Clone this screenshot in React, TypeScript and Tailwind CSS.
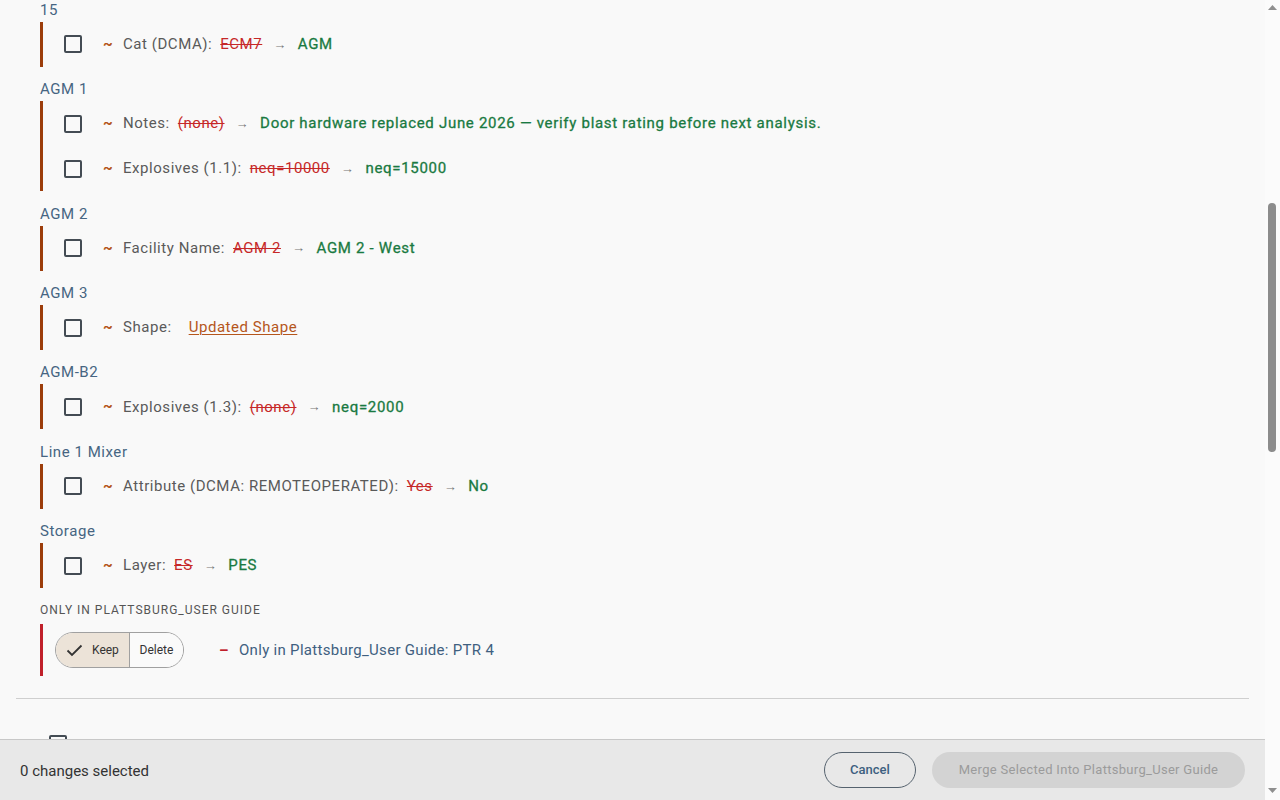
import React, { useLayoutEffect, useRef } from "react";

type Row = { label: string; old?: string; next?: string; link?: string };
type Section = { name: string; rows: Row[] };

const above: Section[] = [
  { name: "10", rows: [{ label: "Cat (DCMA):", old: "ECM", next: "AGM" }] },
  { name: "11", rows: [{ label: "Facility Name:", old: "11", next: "Bldg 11" }] },
  { name: "12", rows: [{ label: "Explosives (1.1):", old: "neq=500", next: "neq=750" }] },
  { name: "13", rows: [{ label: "Layer:", old: "ES", next: "PES" }] },
  { name: "14", rows: [{ label: "Shape:", link: "Updated Shape" }] },
];

const sections: Section[] = [
  { name: "15", rows: [{ label: "Cat (DCMA):", old: "ECM7", next: "AGM" }] },
  {
    name: "AGM 1",
    rows: [
      {
        label: "Notes:",
        old: "(none)",
        next: "Door hardware replaced June 2026 — verify blast rating before next analysis.",
      },
      { label: "Explosives (1.1):", old: "neq=10000", next: "neq=15000" },
    ],
  },
  { name: "AGM 2", rows: [{ label: "Facility Name:", old: "AGM 2", next: "AGM 2 - West" }] },
  { name: "AGM 3", rows: [{ label: "Shape:", link: "Updated Shape" }] },
  { name: "AGM-B2", rows: [{ label: "Explosives (1.3):", old: "(none)", next: "neq=2000" }] },
  {
    name: "Line 1 Mixer",
    rows: [{ label: "Attribute (DCMA: REMOTEOPERATED):", old: "Yes", next: "No" }],
  },
  { name: "Storage", rows: [{ label: "Layer:", old: "ES", next: "PES" }] },
];

const below = [
  "Apply layer styling from Plattsburg_Draft",
  "Copy new facility symbols",
  "Update arc definitions",
  "Recalculate QD arcs after merge",
  "Keep custom labels",
  "Merge PES/ES relationships",
  "Merge exposure notes",
  "Include deleted facilities",
  "Include hidden layers",
  "Include archived revisions",
  "Preserve author metadata",
  "Preserve map extents",
  "Preserve print layouts",
  "Notify reviewers after merge",
  "Create backup before merge",
  "Write merge report",
  "Validate geometry",
  "Validate explosives limits",
  "Validate hazard divisions",
];

function Checkbox() {
  return (
    <span className="block h-[18px] w-[18px] shrink-0 rounded-[2px] border-2 border-[#444c54] bg-transparent" />
  );
}

function ChangeRow({ row }: { row: Row }) {
  return (
    <div className="flex h-[45px] items-center">
      <Checkbox />
      <span className="ml-[21px] w-[7px] text-[15px] font-bold leading-none text-[#b5561c]">~</span>
      <span className="ml-[13px] text-[#5a5a5a]">{row.label}</span>
      {row.link ? (
        <span className="ml-[17px] text-[#b5561c] underline decoration-1 underline-offset-2">
          {row.link}
        </span>
      ) : (
        <>
          <span className="ml-[8px] text-[#c62828] line-through decoration-1">{row.old}</span>
          <span className="mx-[11px] text-[13px] text-[#777]">→</span>
          <span className="tracking-[0.7px] text-[#1a7a42] [-webkit-text-stroke:0.3px_#1a7a42]">
            {row.next}
          </span>
        </>
      )}
    </div>
  );
}

function SectionBlock({ s, anchor }: { s: Section; anchor?: React.Ref<HTMLDivElement> }) {
  return (
    <div className="mt-[10.4px]">
      <div ref={anchor} className="h-6 text-[15px] leading-6 text-[#466582]">
        {s.name}
      </div>
      <div className="border-l-[3px] border-[#9c3d0b] pl-[21px]">
        {s.rows.map((r, i) => (
          <ChangeRow key={i} row={r} />
        ))}
      </div>
    </div>
  );
}

export default function App() {
  const scroller = useRef<HTMLDivElement>(null);
  const anchor = useRef<HTMLDivElement>(null);

  useLayoutEffect(() => {
    const sc = scroller.current;
    const an = anchor.current;
    if (sc && an) {
      sc.scrollTop += an.getBoundingClientRect().top + 2;
    }
  }, []);

  return (
    <div
      className="flex h-screen bg-[#f9f9f9] text-[15px] tracking-[0.55px] text-[#333]"
      style={{ fontFamily: "Roboto, 'Liberation Sans', sans-serif" }}
    >
      <div ref={scroller} className="relative h-screen w-[1265px] shrink-0 overflow-y-scroll">
        <div className="px-4">
          <div className="pl-6 pt-6">
            <div className="text-[20px] font-medium text-[#2f4a63]">
              Merge Plattsburg_Draft into Plattsburg_User Guide
            </div>
            <div className="mt-2 text-[13px] text-[#666]">
              Review the differences below and select the changes to merge.
            </div>
            <div className="mt-6 text-[12px] font-medium uppercase tracking-[1px] text-[#555]">
              Changed in Plattsburg_Draft
            </div>
            {above.map((s) => (
              <SectionBlock key={s.name} s={s} />
            ))}
            {sections.map((s, i) => (
              <SectionBlock key={s.name} s={s} anchor={i === 0 ? anchor : undefined} />
            ))}

            <div className="mt-[10px] h-6 text-[12px] uppercase leading-6 tracking-[1px] text-[#555]">
              Only in Plattsburg_User Guide
            </div>
            <div className="mt-[2px] flex items-center border-l-[3px] border-[#c0202a] py-2 pl-3">
              <div className="flex h-9 overflow-hidden rounded-full border border-[#a0a0a0] text-[12px] tracking-normal">
                <button className="flex w-[73px] items-center gap-[9px] bg-[#ece3d8] pl-[10px] text-[#333]">
                  <svg width="17" height="13" viewBox="0 0 17 13" fill="none">
                    <path d="M1.5 6.5 L6 11 L15.5 1.5" stroke="#333" strokeWidth="1.8" />
                  </svg>
                  Keep
                </button>
                <button className="w-[54px] border-l border-[#a0a0a0] bg-[#fafafa] text-[#333]">
                  Delete
                </button>
              </div>
              <span className="ml-[35px] w-[8px] text-[15px] font-bold leading-none text-[#c0202a]">–</span>
              <span className="ml-[12px] tracking-[0.3px] text-[#3f6080]">
                Only in Plattsburg_User Guide: PTR 4
              </span>
            </div>
          </div>

          <div className="mt-[22px] border-t border-[#cfcfcf]" />

          <div className="pb-10 pl-[33px] pt-[36px]">
            {below.map((t) => (
              <div key={t} className="flex h-[46px] items-start gap-4">
                <Checkbox />
                <span className="mt-[10px] text-[#444]">{t}</span>
              </div>
            ))}
          </div>
        </div>

        <div className="sticky bottom-0 flex h-[61px] items-center justify-between border-t border-[#c8c8c8] bg-[#e8e8e8] px-5">
          <span className="pt-[2px] text-[15px] tracking-normal text-[#333]">0 changes selected</span>
          <div className="flex gap-4">
            <button className="h-9 w-[92px] rounded-full border border-[#55626e] text-[13px] font-medium tracking-normal text-[#3d5f80]">
              Cancel
            </button>
            <button className="h-9 w-[313px] rounded-full bg-[#d3d3d3] text-[13px] tracking-[0.3px] text-[#9b9b9b]">
              Merge Selected Into Plattsburg_User Guide
            </button>
          </div>
        </div>
      </div>

      {/* scrollbar */}
      <div className="relative h-screen w-[15px] shrink-0 bg-[#fbfbfb]">
        <svg className="absolute left-[3px] top-[5px]" width="9" height="5" viewBox="0 0 9 5">
          <path d="M0 5 L4.5 0 L9 5 Z" fill="#8f8f8f" />
        </svg>
        <div className="absolute left-[3px] top-[203px] h-[249px] w-[8px] rounded-full bg-[#8c8c8c]" />
        <svg className="absolute bottom-[7px] left-[3px]" width="9" height="5" viewBox="0 0 9 5">
          <path d="M0 0 L9 0 L4.5 5 Z" fill="#8f8f8f" />
        </svg>
      </div>
    </div>
  );
}
